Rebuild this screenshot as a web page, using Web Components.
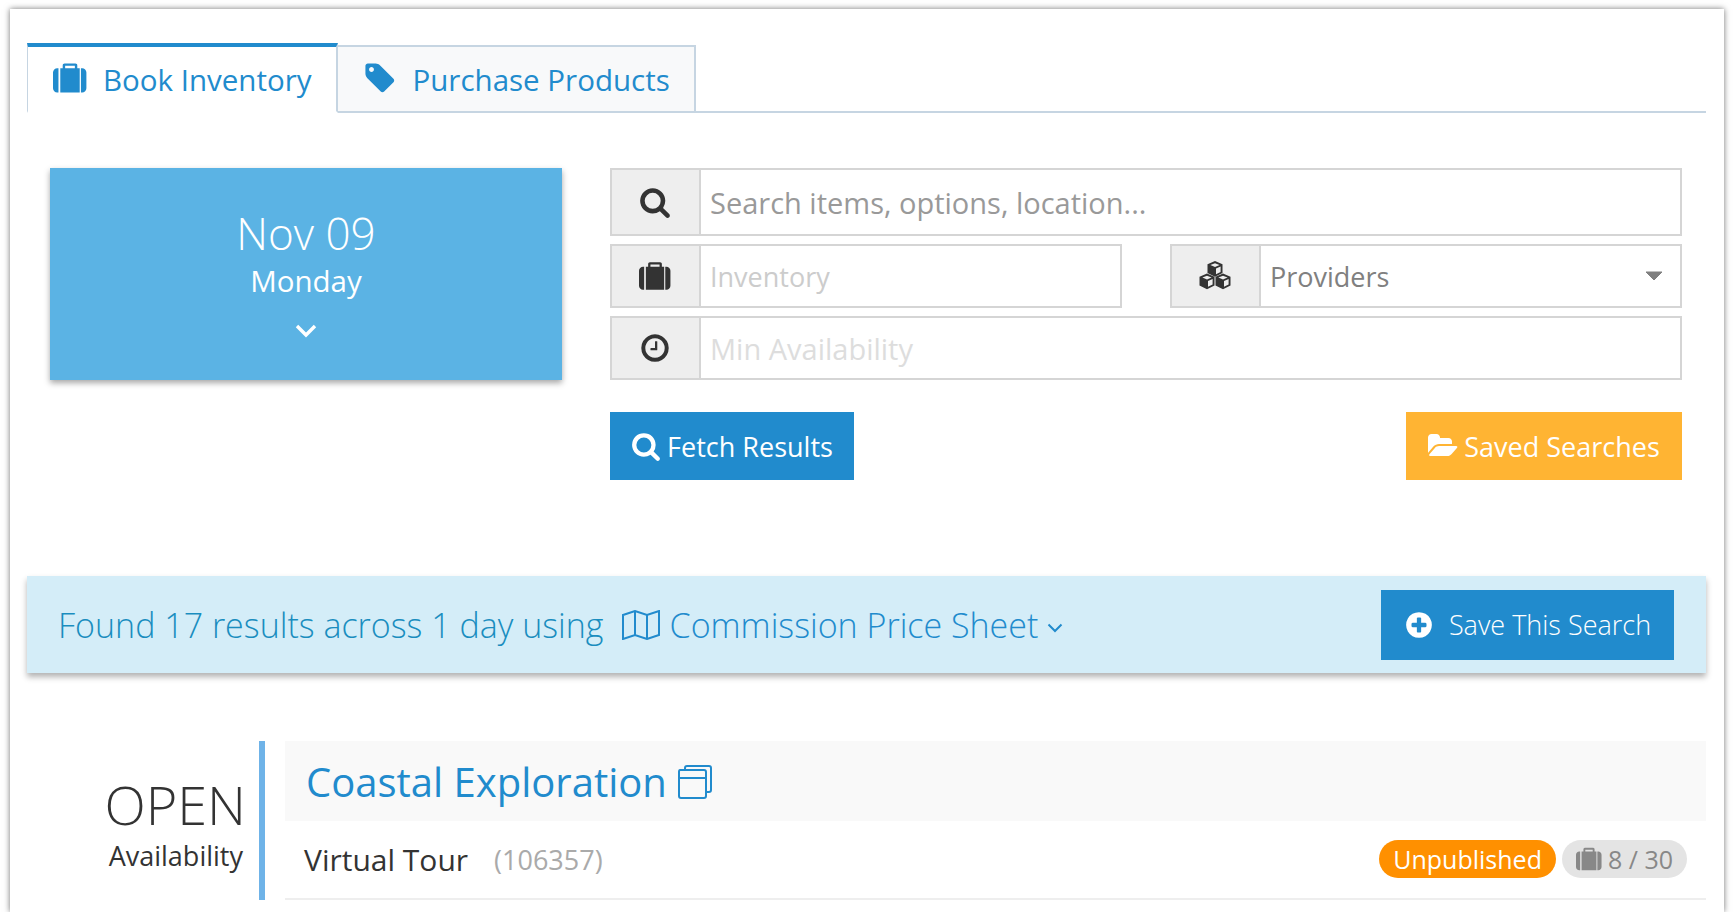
<!DOCTYPE html>
<html lang="en">
<head>
<meta charset="utf-8">
<title>Book Inventory</title>
<style>
  html, body { margin: 0; padding: 0; background: #fff; }
  body { font-family: "Open Sans", "Noto Sans", sans-serif; overflow: hidden; }
</style>
</head>
<body>
<book-page>
  <tab-bar>
    <tab-item active icon="suitcase">Book Inventory</tab-item>
    <tab-item icon="tag">Purchase Products</tab-item>
  </tab-bar>

  <search-panel>
    <date-box slot="date" day="Monday">Nov 09</date-box>
    <input-group icon="search" size="tall" tone="mid">Search items, options, location...</input-group>
    <div style="display:flex;justify-content:space-between">
      <input-group icon="suitcase" width="512" tone="light">Inventory</input-group>
      <input-group icon="cubes" width="512" tone="value" caret>Providers</input-group>
    </div>
    <input-group icon="clock" tone="faint">Min Availability</input-group>
    <div style="display:flex;justify-content:space-between;margin-top:24px">
      <action-button icon="search" width="244">Fetch Results</action-button>
      <action-button icon="folder" color="#ffb433" width="276">Saved Searches</action-button>
    </div>
  </search-panel>

  <results-banner>
    <span>Found 17 results across 1 day using</span>
    <span slot="sheet">Commission Price Sheet</span>
    <action-button slot="action" icon="plus" width="293" height="70" gap="15">Save This Search</action-button>
  </results-banner>

  <result-row>
    <span slot="title">Coastal Exploration</span>
    <span slot="name">Virtual Tour</span>
    <span slot="code">(106357)</span>
    <status-pill slot="pills" color="#ff9000" text="#fff">Unpublished</status-pill>
    <status-pill slot="pills" color="#e4e4e4" text="#888" icon="suitcase">8 / 30</status-pill>
  </result-row>
</book-page>

<script>
// icon shapes, all on a 1792 grid unless viewBox says otherwise
const ICONS = {
  suitcase: { box: "0 0 1792 1792", d: "M640 384h512v-128h-512v128zm-352 0v1280h-64q-92 0-158-66t-66-158v-832q0-92 66-158t158-66h64zm1120 0v1280h-1024v-1280h128v-160q0-40 28-68t68-28h576q40 0 68 28t28 68v160h128zm352 224v832q0 92-66 158t-158 66h-64v-1280h64q92 0 158 66t66 158z" },
  tag: { box: "0 0 1792 1792", d: "M576 448q0-53-37.5-90.5t-90.5-37.5-90.5 37.5-37.5 90.5 37.5 90.5 90.5 37.5 90.5-37.5 37.5-90.5zm1067 576q0 53-37 90l-491 492q-39 37-91 37-53 0-90-37l-715-716q-38-37-64.5-101t-26.5-117v-416q0-52 38-90t90-38h416q53 0 117 26.5t102 64.5l715 714q37 39 37 91z" },
  search: { box: "0 0 1792 1792", d: "M1216 832q0-185-131.5-316.5t-316.5-131.5-316.5 131.5-131.5 316.5 131.5 316.5 316.5 131.5 316.5-131.5 131.5-316.5zm512 832q0 52-38 90t-90 38q-54 0-90-38l-343-342q-179 124-399 124-143 0-273.5-55.5t-225-150-150-225-55.5-273.5 55.5-273.5 150-225 225-150 273.5-55.5 273.5 55.5 225 150 150 225 55.5 273.5q0 220-124 399l343 343q37 37 37 90z" },
  clock: { box: "0 0 1792 1792", d: "M1024 544v448q0 14-9 23t-23 9h-320q-14 0-23-9t-9-23v-64q0-14 9-23t23-9h224v-352q0-14 9-23t23-9h64q14 0 23 9t9 23zm416 352q0-148-73-273t-198-198-273-73-273 73-198 198-73 273 73 273 198 198 273 73 273-73 198-198 73-273zm224 0q0 209-103 385.5t-279.5 279.5-385.5 103-385.5-103-279.5-279.5-103-385.5 103-385.5 279.5-279.5 385.5-103 385.5 103 279.5 279.5 103 385.5z" },
  folder: { box: "0 0 1920 1792", d: "M1879 952q0 31-31 66l-336 396q-43 51-120.5 86.5t-143.5 35.5h-1088q-34 0-60.5-13t-26.5-43q0-31 31-66l336-396q43-51 120.5-86.5t143.5-35.5h1088q34 0 60.5 13t26.5 43zm-343-344v160h-832q-94 0-197 47.5t-164 119.5l-337 396-5 6q0-4-.5-12.5t-.5-12.5v-960q0-92 66-158t158-66h320q92 0 158 66t66 158v32h544q92 0 158 66t66 158z" },
  plus: { box: "0 0 1792 1792", d: "M1344 960v-128q0-26-19-45t-45-19h-256v-256q0-26-19-45t-45-19h-128q-26 0-45 19t-19 45v256h-256q-26 0-45 19t-19 45v128q0 26 19 45t45 19h256v256q0 26 19 45t45 19h128q26 0 45-19t19-45v-256h256q26 0 45-19t19-45zm320-64q0 209-103 385.5t-279.5 279.5-385.5 103-385.5-103-279.5-279.5-103-385.5 103-385.5 279.5-279.5 385.5-103 385.5 103 279.5 279.5 103 385.5z" }
};

function iconSvg(name, size) {
  if (name === "cubes") {
    // three stacked boxes, dark sides with white tops
    const cube = (x, y) => `
      <path d="M${x} ${y-8.5}l7.5 3.2v8.8l-7.5 3.7-7.5-3.7v-8.8z" fill="currentColor"/>
      <path d="M${x} ${y-6.3}l4.6 1.9-4.6 1.9-4.6-1.9z" fill="#eee"/>
      <path d="M${x+1} ${y-1.1}l4.6-1.9v5.6l-4.6 2.2z" fill="#eee"/>`;
    return `<svg width="${size}" height="${size}" viewBox="0 0 32 32" aria-hidden="true">${cube(16, 9.5)}${cube(8, 22)}${cube(24, 22)}</svg>`;
  }
  const i = ICONS[name];
  return `<svg width="${size}" height="${size}" viewBox="${i.box}" aria-hidden="true"><path d="${i.d}" fill="currentColor"/></svg>`;
}

// outer white sheet with the soft edge
class BookPage extends HTMLElement {
  constructor() {
    super();
    this.attachShadow({ mode: "open" }).innerHTML = `
      <style>
        :host {
          display: block;
          box-sizing: border-box;
          width: 1714px;
          height: 903px;
          margin: 9px 10px 0;
          padding: 34px 18px 0 17px;
          background: #fff;
          box-shadow: 0 0 6px rgba(0,0,0,.55);
          overflow: hidden;
          color: #333;
        }
      </style>
      <slot></slot>`;
  }
}

class TabBar extends HTMLElement {
  constructor() {
    super();
    this.attachShadow({ mode: "open" }).innerHTML = `
      <style>
        :host {
          display: flex;
          align-items: flex-end;
          height: 70px;
          border-bottom: 2px solid #c6d5e2;
          box-sizing: border-box;
        }
      </style>
      <slot></slot>`;
  }
}

class TabItem extends HTMLElement {
  constructor() {
    super();
    const on = this.hasAttribute("active");
    this.attachShadow({ mode: "open" }).innerHTML = `
      <style>
        :host {
          display: flex;
          align-items: center;
          gap: 16px;
          box-sizing: border-box;
          height: ${on ? 70 : 68}px;
          margin-bottom: ${on ? -2 : -2}px;
          padding: 0 24px 0 25px;
          font-size: 29.5px;
          color: #218bcd;
          background: ${on ? "#fff" : "#f8f9fa"};
          border: 2px solid #c6d5e2;
          border-left-width: ${on ? 1 : 0}px;
          border-top: ${on ? "4px solid #218bcd" : "2px solid #c6d5e2"};
          border-bottom: ${on ? "2px solid #fff" : "2px solid #c6d5e2"};
        }
        svg { display: block; margin-top: -2px; }
      </style>
      ${iconSvg(this.getAttribute("icon"), 34)}<slot></slot>`;
  }
}

// date tile on the left, the form stack on the right
class SearchPanel extends HTMLElement {
  constructor() {
    super();
    this.attachShadow({ mode: "open" }).innerHTML = `
      <style>
        :host {
          display: grid;
          grid-template-columns: 512px 1072px;
          column-gap: 48px;
          margin: 55px 24px 0 23px;
          align-items: start;
        }
        .form { display: flex; flex-direction: column; gap: 8px; }
      </style>
      <slot name="date"></slot>
      <div class="form"><slot></slot></div>`;
  }
}

class DateBox extends HTMLElement {
  constructor() {
    super();
    this.attachShadow({ mode: "open" }).innerHTML = `
      <style>
        :host {
          display: flex;
          flex-direction: column;
          align-items: center;
          box-sizing: border-box;
          height: 212px;
          padding-top: 40px;
          background: #5bb3e4;
          color: #fff;
          box-shadow: 0 3px 6px rgba(0,0,0,.35);
        }
        .big { font-size: 44px; font-weight: 300; line-height: 50px; }
        .day { font-size: 29.5px; line-height: 40px; margin-top: 3px; }
        svg { margin-top: 22px; display: block; }
      </style>
      <div class="big"><slot></slot></div>
      <div class="day">${this.getAttribute("day")}</div>
      <svg width="24" height="16" viewBox="0 0 24 16" aria-hidden="true"><path d="M3 3l9 9 9-9" fill="none" stroke="#fff" stroke-width="3.4"/></svg>`;
  }
}

class InputGroup extends HTMLElement {
  constructor() {
    super();
    const tones = {
      mid: ["#999", 29, 400],
      light: ["#ccc", 27, 400],
      faint: ["#ddd", 29, 400],
      value: ["#808080", 27, 400]
    };
    const [tone, font, weight] = tones[this.getAttribute("tone")];
    const w = this.getAttribute("width");
    const caret = this.hasAttribute("caret")
      ? `<svg width="18" height="10" viewBox="0 0 18 10" aria-hidden="true"><path d="M1 1h16l-8 8z" fill="#808080" stroke="#808080" stroke-linejoin="round"/></svg>`
      : "";
    this.attachShadow({ mode: "open" }).innerHTML = `
      <style>
        :host {
          display: flex;
          box-sizing: border-box;
          width: ${w ? w + "px" : "auto"};
          height: ${this.getAttribute("size") === "tall" ? 68 : 64}px;
          border: 2px solid #d5d5d5;
        }
        .addon {
          flex: none;
          display: flex;
          align-items: center;
          justify-content: center;
          width: 89px;
          box-sizing: border-box;
          padding-right: 2px;
          background: #eee;
          border-right: 2px solid #d5d5d5;
          color: #333;
        }
        .field {
          flex: 1;
          display: flex;
          align-items: center;
          justify-content: space-between;
          padding: 0 17px 0 9px;
          font-size: ${font}px;
          font-weight: ${weight};
          color: ${tone};
        }
      </style>
      <div class="addon">${iconSvg(this.getAttribute("icon"), 32)}</div>
      <div class="field"><span><slot></slot></span>${caret}</div>`;
  }
}

class ActionButton extends HTMLElement {
  constructor() {
    super();
    const h = this.getAttribute("height") || 68;
    this.attachShadow({ mode: "open" }).innerHTML = `
      <style>
        :host {
          display: flex;
          align-items: center;
          justify-content: center;
          gap: ${this.getAttribute("gap") || 6}px;
          box-sizing: border-box;
          width: ${this.getAttribute("width")}px;
          height: ${h}px;
          background: ${this.getAttribute("color") || "#218bcd"};
          color: #fff;
          font-size: 27px;
        }
        svg { display: block; }
      </style>
      ${iconSvg(this.getAttribute("icon"), 30)}<span><slot></slot></span>`;
  }
}

class ResultsBanner extends HTMLElement {
  constructor() {
    super();
    this.attachShadow({ mode: "open" }).innerHTML = `
      <style>
        :host {
          display: flex;
          align-items: center;
          box-sizing: border-box;
          height: 97px;
          margin-top: 96px;
          padding: 0 32px 0 31px;
          background: #d4edf8;
          color: #1a8dbf;
          box-shadow: 0 4px 6px rgba(0,0,0,.3);
          font-size: 34px;
          font-weight: 300;
        }
        .sheet { display: flex; align-items: center; color: #218bcd; margin-left: 17px; flex: 1; }
        .sheet svg { display: block; }
        .sheet svg.map { margin-right: 9px; }
        .sheet svg.down { margin: 6px 0 0 9px; }
      </style>
      <slot></slot>
      <div class="sheet">
        <svg class="map" width="40" height="30" viewBox="0 0 40 30" aria-hidden="true"><path d="M2 5l12-4 12 4 12-4v24l-12 4-12-4-12 4zM14 1v24M26 5v24" fill="none" stroke="currentColor" stroke-width="2"/></svg>
        <slot name="sheet"></slot>
        <svg class="down" width="16" height="10" viewBox="0 0 16 10" aria-hidden="true"><path d="M1.5 1.5l6.5 6.5 6.5-6.5" fill="none" stroke="currentColor" stroke-width="2"/></svg>
      </div>
      <slot name="action"></slot>`;
  }
}

class ResultRow extends HTMLElement {
  constructor() {
    super();
    this.attachShadow({ mode: "open" }).innerHTML = `
      <style>
        :host {
          display: grid;
          grid-template-columns: 232px 6px 1fr;
          margin-top: 68px;
          height: 159px;
          color: #333;
        }
        .avail { display: flex; flex-direction: column; align-items: flex-end; padding: 31px 16px 0 0; }
        .open { font-size: 54px; font-weight: 300; line-height: 64px; margin-right: -3px; }
        .label { font-size: 27px; line-height: 36px; margin-top: 2px; }
        .rule { background: #6fb3e8; }
        .body { margin-left: 20px; display: flex; flex-direction: column; }
        .head {
          display: flex;
          align-items: center;
          height: 80px;
          padding-left: 21px;
          background: #f9f9f9;
          color: #218bcd;
          font-size: 40px;
        }
        .head svg { margin: 2px 0 0 10px; display: block; }
        .line {
          flex: 1;
          display: flex;
          align-items: center;
          padding: 0 19px 0 19px;
          border-bottom: 2px solid #eee;
          font-size: 30px;
        }
        .code { color: #aaa; font-size: 27px; margin-left: 26px; }
        .pills { margin-left: auto; display: flex; gap: 6px; margin-top: -2px; }
      </style>
      <div class="avail">
        <div class="open">OPEN</div>
        <div class="label">Availability</div>
      </div>
      <div class="rule"></div>
      <div class="body">
        <div class="head">
          <slot name="title"></slot>
          <svg width="36" height="36" viewBox="0 0 36 36" aria-hidden="true"><path d="M8 6V4q0-2 2-2h22q2 0 2 2v22q0 2-2 2h-3M3 6h24q2 0 2 2v24q0 2-2 2H4q-2 0-2-2V8q0-2 1-2zM2 14h27" fill="none" stroke="currentColor" stroke-width="2"/></svg>
        </div>
        <div class="line">
          <slot name="name"></slot>
          <span class="code"><slot name="code"></slot></span>
          <div class="pills"><slot name="pills"></slot></div>
        </div>
      </div>`;
  }
}

class StatusPill extends HTMLElement {
  constructor() {
    super();
    const icon = this.getAttribute("icon");
    this.attachShadow({ mode: "open" }).innerHTML = `
      <style>
        :host {
          display: flex;
          align-items: center;
          gap: 6px;
          box-sizing: border-box;
          height: 38px;
          padding: 0 14px;
          border-radius: 19px;
          background: ${this.getAttribute("color")};
          color: ${this.getAttribute("text")};
          font-size: 25px;
        }
        svg { display: block; }
      </style>
      ${icon ? iconSvg(icon, 26) : ""}<slot></slot>`;
  }
}

customElements.define("book-page", BookPage);
customElements.define("tab-bar", TabBar);
customElements.define("tab-item", TabItem);
customElements.define("search-panel", SearchPanel);
customElements.define("date-box", DateBox);
customElements.define("input-group", InputGroup);
customElements.define("action-button", ActionButton);
customElements.define("results-banner", ResultsBanner);
customElements.define("result-row", ResultRow);
customElements.define("status-pill", StatusPill);
</script>
</body>
</html>
